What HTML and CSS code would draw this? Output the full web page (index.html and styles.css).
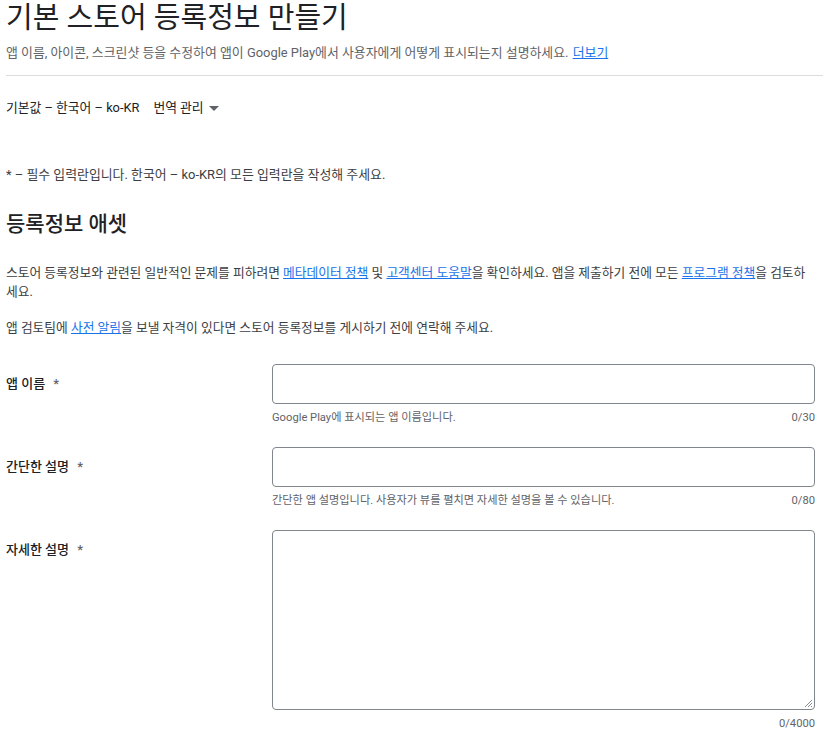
FILE: index.html
```html
<!DOCTYPE html>
<html lang="ko">
<head>
<meta charset="utf-8">
<link rel="stylesheet" href="styles.css">
</head>
<body>
<div class="page">
  <h1 class="title">기본 스토어 등록정보 만들기</h1>
  <p class="subtitle">앱 이름, 아이콘, 스크린샷 등을 수정하여 앱이 Google Play에서 사용자에게 어떻게 표시되는지 설명하세요. <a href="#" class="link more">더보기</a></p>
  <div class="divider"></div>
  <div class="lang-row">
    <span>기본값 – 한국어 – ko-KR</span>
    <span class="translate">번역 관리 <svg class="caret" width="10" height="5" viewBox="0 0 10 5"><path d="M0 0L10 0L5 5Z" fill="#5f6368"/></svg></span>
  </div>
  <p class="required">* – 필수 입력란입니다. 한국어 – ko-KR의 모든 입력란을 작성해 주세요.</p>
  <h2 class="section">등록정보 애셋</h2>
  <p class="para">스토어 등록정보와 관련된 일반적인 문제를 피하려면 <a href="#" class="link">메타데이터 정책</a> 및 <a href="#" class="link">고객센터 도움말</a>을 확인하세요. 앱을 제출하기 전에 모든 <a href="#" class="link">프로그램 정책</a>을 검토하세요.</p>
  <p class="para para2">앱 검토팀에 <a href="#" class="link">사전 알림</a>을 보낼 자격이 있다면 스토어 등록정보를 게시하기 전에 연락해 주세요.</p>

  <div class="form">
    <div class="row">
      <label class="label">앱 이름 <span class="star">*</span></label>
      <div class="field">
        <div class="input"></div>
        <div class="hint"><span>Google Play에 표시되는 앱 이름입니다.</span><span>0/30</span></div>
      </div>
    </div>
    <div class="row">
      <label class="label">간단한 설명 <span class="star">*</span></label>
      <div class="field">
        <div class="input"></div>
        <div class="hint"><span>간단한 앱 설명입니다. 사용자가 뷰를 펼치면 자세한 설명을 볼 수 있습니다.</span><span>0/80</span></div>
      </div>
    </div>
    <div class="row">
      <label class="label">자세한 설명 <span class="star">*</span></label>
      <div class="field">
        <div class="input textarea"><svg class="grip" width="9" height="9" viewBox="0 0 9 9"><path d="M8 1L1 8M8 4L4 8M8 7L7 8" stroke="#8a8a8a" stroke-width="1"/></svg></div>
        <div class="hint hint-end"><span>0/4000</span></div>
      </div>
    </div>
  </div>
</div>
</body>
</html>
```

FILE: styles.css
```css
html, body {
  margin: 0;
  padding: 0;
  background: #fff;
}
body {
  font-family: Roboto, "Noto Sans CJK KR", sans-serif;
  color: #202124;
}
.page {
  padding: 0 8px 0 6px;
  overflow: hidden;
}
.title {
  font-size: 29px;
  font-weight: 400;
  line-height: 36px;
  margin: 0;
  color: #202124;
}
.subtitle {
  font-size: 12.9px;
  line-height: 20px;
  margin: 7px 0 0;
  color: #5f6368;
}
.link {
  color: #1a73e8;
  text-decoration: underline;
}
.more {
  margin-left: 1px;
}
.divider {
  height: 1px;
  background: #dadce0;
  margin: 12px -8px 0 0;
}
.lang-row {
  font-size: 12.8px;
  line-height: 20px;
  margin-top: 22px;
  display: flex;
  align-items: center;
  gap: 14px;
  color: #202124;
}
.translate {
  display: inline-flex;
  align-items: center;
  gap: 5px;
}
.caret {
  display: block;
}
.required {
  font-size: 12.9px;
  line-height: 18px;
  margin: 48px 0 0;
  color: #3c4043;
}
.section {
  font-size: 21px;
  font-weight: 500;
  line-height: 28px;
  margin: 26px 0 0;
}
.para {
  font-size: 12.75px;
  line-height: 19px;
  margin: 25px 0 0;
  color: #3c4043;
}
.para2 {
  margin-top: 17px;
}
.form {
  margin-top: 27px;
  display: flex;
  flex-direction: column;
  gap: 21px;
}
.row {
  display: grid;
  grid-template-columns: 266px 1fr;
}
.label {
  font-size: 13px;
  font-weight: 500;
  line-height: 20px;
  padding-top: 10px;
  color: #202124;
}
.star {
  margin-left: 5px;
  color: #5f6368;
}
.field {
  display: flex;
  flex-direction: column;
}
.input {
  height: 40px;
  box-sizing: border-box;
  border: 1px solid #80868b;
  border-radius: 4px;
  position: relative;
}
.textarea {
  height: 180px;
}
.grip {
  position: absolute;
  right: 1px;
  bottom: 1px;
}
.hint {
  display: flex;
  justify-content: space-between;
  font-size: 11.2px;
  line-height: 16px;
  margin-top: 6px;
  color: #5f6368;
}
.hint-end {
  justify-content: flex-end;
}
```
